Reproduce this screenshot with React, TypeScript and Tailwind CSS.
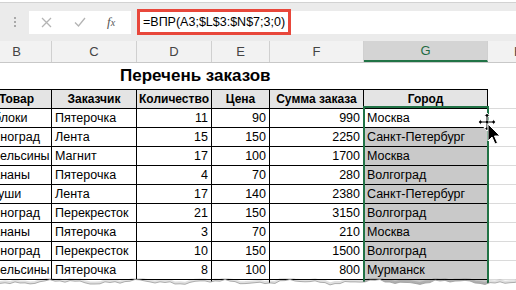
import React from 'react';

// B..G column widths, B starts off-screen at x = -18
const COLS = ['w-[70px]', 'w-[85px]', 'w-[75px]', 'w-[58px]', 'w-[94px]', 'w-[124px]'];
const LETTERS = ['B', 'C', 'D', 'E', 'F', 'G'];
const HEADERS = ['Товар', 'Заказчик', 'Количество', 'Цена', 'Сумма заказа', 'Город'];

type Row = [string, string, number, number, number, string];

const rows: Row[] = [
    ['Яблоки', 'Пятерочка', 11, 90, 990, 'Москва'],
    ['Виноград', 'Лента', 15, 150, 2250, 'Санкт-Петербург'],
    ['Апельсины', 'Магнит', 17, 100, 1700, 'Москва'],
    ['Бананы', 'Пятерочка', 4, 70, 280, 'Волгоград'],
    ['Груши', 'Лента', 17, 140, 2380, 'Санкт-Петербург'],
    ['Виноград', 'Перекресток', 21, 150, 3150, 'Волгоград'],
    ['Бананы', 'Пятерочка', 3, 70, 210, 'Москва'],
    ['Виноград', 'Перекресток', 10, 150, 1500, 'Волгоград'],
    ['Апельсины', 'Пятерочка', 8, 100, 800, 'Мурманск'],
    ['Груши', 'Магнит', 16, 150, 2400, 'Санкт-Петербург'],
];

// torn paper edge along the bottom
const tornPoints: string[] = [];
for (let x = 0; x <= 520; x += 5) {
    const y = 4 + 1.4 * Math.sin(x * 0.08) + 1.0 * Math.sin(x * 0.21 + 1) + 0.6 * Math.sin(x * 0.57 + 2);
    tornPoints.push(`${x},${y.toFixed(1)}`);
}
const tornLine = 'M' + tornPoints.join(' L');
const tornFill = tornLine + ' L520,20 L0,20 Z';

const cell = 'shrink-0 h-full flex items-center px-[3px] whitespace-nowrap overflow-hidden border-r border-b border-black';

const TornEdge: React.FC = () => (
    <svg className="absolute left-0 bottom-0" width="516" height="12" viewBox="0 0 516 12">
        <path d={tornLine} fill="none" stroke="#000" strokeOpacity="0.12" strokeWidth="3" transform="translate(0,-1)" />
        <path d={tornFill} fill="#fff" />
        <path d={tornLine} fill="none" stroke="#9a9a9a" strokeWidth="0.8" />
    </svg>
);

const MoveCursor: React.FC = () => (
    <svg className="absolute left-[477px] top-[112px]" width="24" height="34" viewBox="0 0 24 34">
        <g stroke="#fff" strokeWidth="1" fill="#000">
            <path d="M10 1 L13 4.5 L11 4.5 L11 9 L15.5 9 L15.5 7 L19 10 L15.5 13 L15.5 11 L11 11 L11 15.5 L13 15.5 L10 19 L7 15.5 L9 15.5 L9 11 L4.5 11 L4.5 13 L1 10 L4.5 7 L4.5 9 L9 9 L9 4.5 L7 4.5 Z" />
            <path d="M11 12 L11 29 L15 25 L18 32 L20.5 31 L17.5 24 L23 24 Z" />
        </g>
    </svg>
);

const App: React.FC = () => {
    return (
        <div className="w-[516px] h-[290px] overflow-hidden relative bg-white text-black font-['Liberation_Sans',Arial,sans-serif]">
            {/* formula bar */}
            <div className="h-[39px] bg-[#ebebeb] border-t border-[#d2d2d2] mt-[2px] flex items-center">
                <div className="w-[29px] flex justify-center pl-[1px]">
                    <div className="flex flex-col gap-[2px]">
                        <span className="size-[2px] bg-[#a9a9a9]" />
                        <span className="size-[2px] bg-[#a9a9a9]" />
                        <span className="size-[2px] bg-[#a9a9a9]" />
                    </div>
                </div>
                <div className="w-[102px] h-[23px] bg-white flex items-center">
                    <svg className="ml-[12px]" width="11" height="11" viewBox="0 0 11 11">
                        <path d="M1 1 L10 10 M10 1 L1 10" stroke="#b4b4b4" strokeWidth="1.3" />
                    </svg>
                    <svg className="ml-[22px]" width="12" height="10" viewBox="0 0 12 10">
                        <path d="M1 5.5 L4.5 9 L11 1" fill="none" stroke="#b4b4b4" strokeWidth="1.3" />
                    </svg>
                    <span className="ml-[21px] text-[13px] italic text-[#555] font-['Liberation_Serif',serif]">
                        f<span className="text-[10px]">x</span>
                    </span>
                </div>
                <div className="ml-[6px] flex-1 h-[23px] bg-white flex items-center">
                    <div className="w-[154px] h-[26px] border-[3px] border-[#e8473b] flex items-center pl-[3px] text-[12.5px] whitespace-nowrap">
                        =ВПР(A3;$L$3:$N$7;3;0)
                    </div>
                </div>
            </div>

            {/* column letters */}
            <div className="flex h-[22px] ml-[-18px] bg-[#f2f2f2] border-b border-[#c8c8c8] text-[13px] text-[#444]">
                {LETTERS.map((l, i) => (
                    <div
                        key={l}
                        className={`${COLS[i]} shrink-0 flex items-center justify-center border-r border-[#d0d0d0] ${
                            l === 'G' ? 'bg-[#d4d4d4] text-[#1f6b43] border-b-2 border-b-[#217346]' : ''
                        }`}
                    >
                        {l}
                    </div>
                ))}
                <div className="flex-1 flex items-center pl-[26px]">H</div>
            </div>

            {/* sheet */}
            <div className="ml-[-18px] flex flex-col text-[12.5px]">
                <div className="h-[26px] flex items-center pl-[138px] text-[17px] font-bold">
                    Перечень заказов
                </div>
                <div className="flex h-[20px] font-bold text-[12px]">
                    {HEADERS.map((h, i) => (
                        <div key={h} className={`${COLS[i]} ${cell} border-t justify-center bg-[#e4e4e4]`}>
                            {h}
                        </div>
                    ))}
                    <div className="flex-1 border-b border-[#dadada]" />
                </div>
                {rows.map((r, idx) => (
                    <div key={idx} className="flex h-[19px]">
                        <div className={`${COLS[0]} ${cell}`}>{r[0]}</div>
                        <div className={`${COLS[1]} ${cell}`}>{r[1]}</div>
                        <div className={`${COLS[2]} ${cell} justify-end`}>{r[2]}</div>
                        <div className={`${COLS[3]} ${cell} justify-end`}>{r[3]}</div>
                        <div className={`${COLS[4]} ${cell} justify-end`}>{r[4]}</div>
                        <div className={`${COLS[5]} ${cell} ${idx === 0 ? 'bg-white' : 'bg-[#c9c9c9]'}`}>{r[5]}</div>
                        <div className="flex-1 border-b border-[#dadada]" />
                    </div>
                ))}
            </div>

            {/* selection */}
            <div className="absolute left-[363px] top-[106px] w-[126px] h-[200px] border-2 border-[#217346]" />
            <MoveCursor />
            <TornEdge />
        </div>
    );
};

export default App;
